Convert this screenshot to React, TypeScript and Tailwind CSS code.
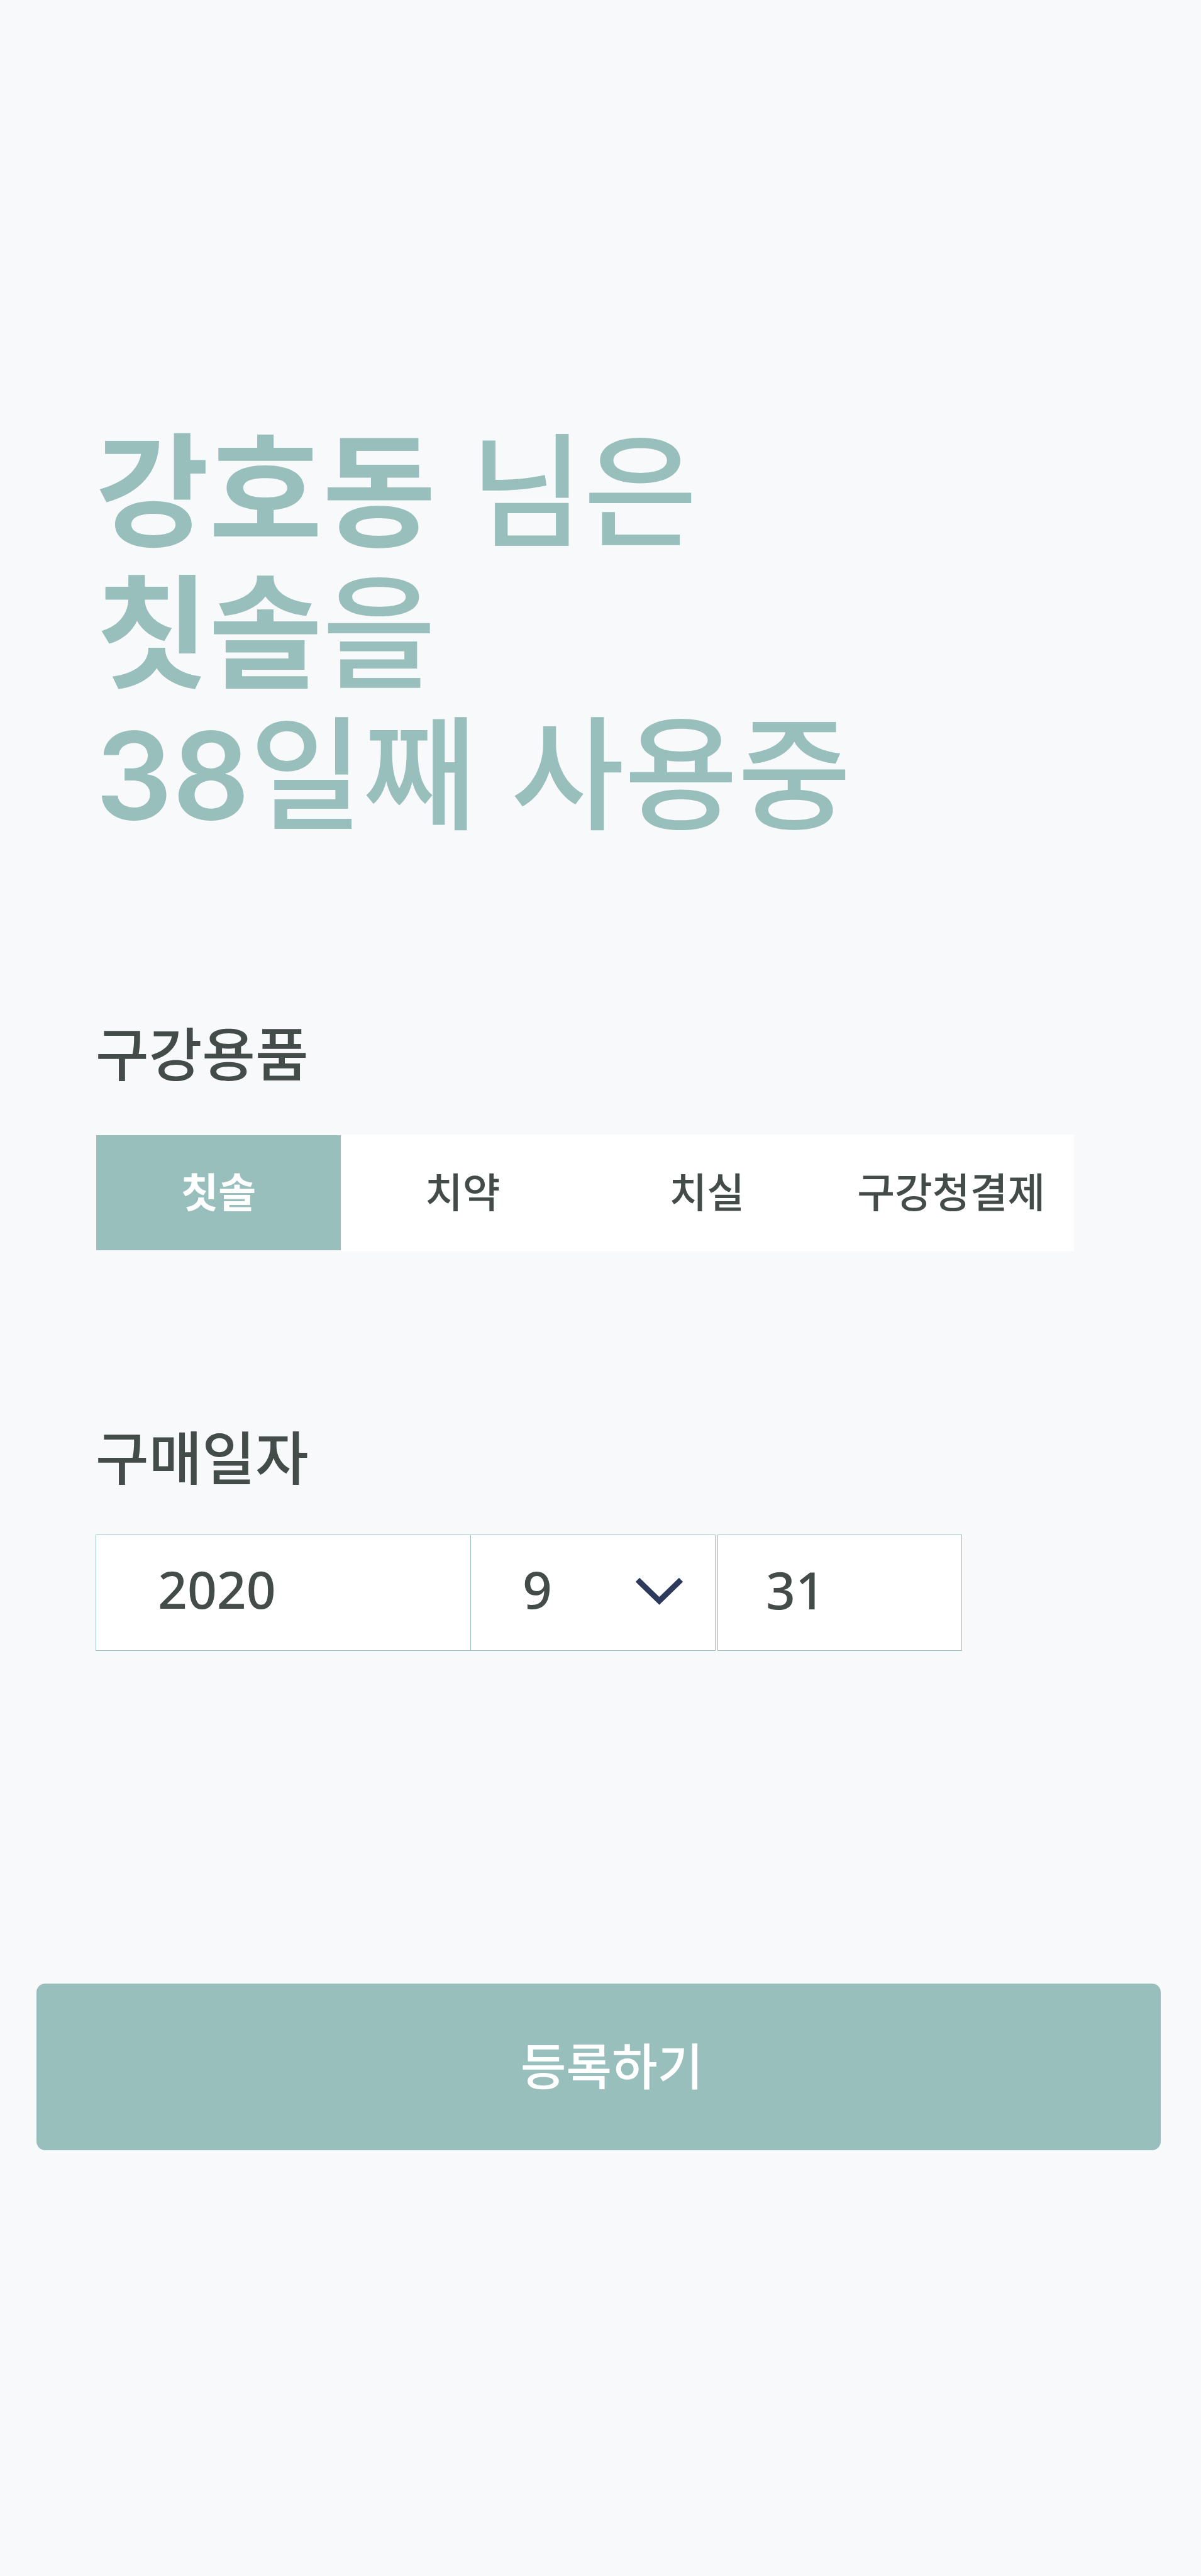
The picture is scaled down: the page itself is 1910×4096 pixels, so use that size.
import { useState } from "react";

const items = ["칫솔", "치약", "치실", "구강청결제"];
const months = ["1", "2", "3", "4", "5", "6", "7", "8", "9", "10", "11", "12"];

function ItemPicker() {
  const [selected, setSelected] = useState("칫솔");
  return (
    <section className="mb-[257px]">
      <h2 id="item-label" className="mb-[66px] text-[92px] leading-[134px] font-medium">
        구강용품
      </h2>
      <div
        role="group"
        aria-labelledby="item-label"
        className="grid h-[185px] grid-cols-4 border border-white bg-white"
      >
        {items.map((item) => (
          <button
            key={item}
            type="button"
            aria-pressed={item === selected}
            onClick={() => setSelected(item)}
            className={
              item === selected
                ? "bg-[#99bfbd] pb-2 text-[65px] font-bold whitespace-nowrap text-white"
                : "bg-white pb-2 text-[65px] font-medium whitespace-nowrap"
            }
          >
            {item}
          </button>
        ))}
      </div>
    </section>
  );
}

function PurchaseDate() {
  return (
    <fieldset className="mb-[529px]">
      <legend className="mb-[60px] text-[92px] leading-[134px] font-medium">구매일자</legend>
      <div className="grid h-[185px] max-w-[1378px] grid-cols-[597fr_389fr_392fr] font-['Noto_Sans','Noto_Sans_CJK_KR',sans-serif] text-[82px] font-medium">
        <input
          aria-label="년"
          defaultValue="2020"
          inputMode="numeric"
          className="w-full min-w-0 rounded-none border border-[#99bfbd] bg-white pb-3 pl-[98px] outline-none"
        />
        <div className="relative">
          <select
            aria-label="월"
            defaultValue="9"
            className="h-full w-full appearance-none rounded-none border border-l-0 border-[#99bfbd] bg-white pb-3 pl-[82px] outline-none"
          >
            {months.map((month) => (
              <option key={month}>{month}</option>
            ))}
          </select>
          <svg
            aria-hidden="true"
            viewBox="0 0 75 44"
            className="pointer-events-none absolute top-[69px] right-[52px] h-[44px] w-[75px]"
          >
            <path d="M3 3 37.500 36.500 72 3" fill="none" stroke="#2c3a5b" strokeWidth="9" />
          </svg>
        </div>
        <div className="pl-[3px]">
          <input
            aria-label="일"
            defaultValue="31"
            inputMode="numeric"
            className="h-full w-full min-w-0 rounded-none border border-[#99bfbd] bg-white pb-3 pl-[76px] outline-none"
          />
        </div>
      </div>
    </fieldset>
  );
}

export default function App() {
  return (
    <main
      lang="ko"
      className="min-h-screen bg-[#f8f9fb] pt-[655px] pb-[660px] font-['Noto_Sans_CJK_KR',sans-serif] text-[#434c48]"
    >
      <form onSubmit={(event) => event.preventDefault()}>
        <div className="pr-[202px] pl-[152px]">
          <h1 className="mb-[274px] text-[196px] leading-[225px] font-medium text-[#99bfbd]">
            <b className="font-bold">강호동</b> 님은
            <br />
            <b className="font-bold">칫솔</b>을
            <br />
            <b className="font-[Inter,sans-serif] text-[192px] leading-none font-semibold">38</b>일째 사용중
          </h1>
          <ItemPicker />
          <PurchaseDate />
        </div>
        <div className="pr-[64px] pl-[58px]">
          <button
            type="submit"
            className="h-[265px] w-full rounded-[14px] bg-[#99bfbd] pb-2 pl-[42px] text-[79px] font-medium text-white"
          >
            등록하기
          </button>
        </div>
      </form>
    </main>
  );
}
